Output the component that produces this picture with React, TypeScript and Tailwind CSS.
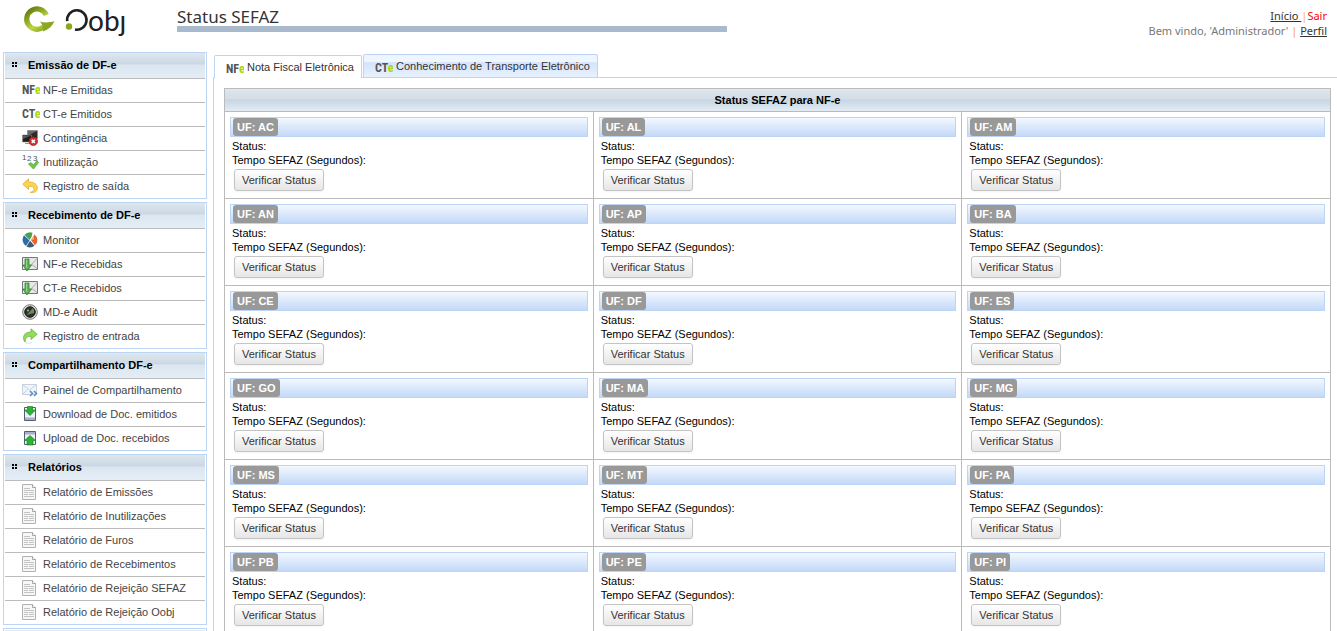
import type { ReactNode } from "react";

const SANS = "font-['Liberation_Sans',Arial,sans-serif]";
const HUMANIST = "font-['Noto_Sans','Open_Sans',sans-serif]";

function DfeIcon({ prefix }: { prefix: string }) {
  return (
    <svg viewBox="0 0 18 16" className="h-4 w-[18px]" aria-hidden="true">
      <text x="0" y="12" fontSize="12" fontWeight="700" fontFamily="'Liberation Sans Narrow', 'Roboto Condensed', sans-serif" fill="#555">
        {prefix}
        <tspan fontSize="12" fill="#a6d60c">e</tspan>
      </text>
    </svg>
  );
}

function ContingencyIcon() {
  return (
    <svg viewBox="0 0 16 16" className="size-4" aria-hidden="true">
      <path d="M5.500.5h10v8h-10z" fill="#2b2b2b" stroke="#8a8a8a" strokeWidth=".6" />
      <path d="M6 1h9L6 5.500z" fill="#6a6a6a" />
      <path d="M.5 5h9v7h-9z" fill="#1d1d1d" stroke="#8a8a8a" strokeWidth=".6" />
      <path d="M1 5.500h8L1 9z" fill="#5a5a5a" />
      <path d="M3 13h5v1H3z" fill="#999" />
      <circle cx="11.300" cy="11.300" r="4.300" fill="#d2302c" stroke="#a31212" strokeWidth=".6" />
      <path d="m9.700 9.700 3.200 3.200m0-3.200-3.200 3.200" stroke="#fff" strokeWidth="1.500" />
    </svg>
  );
}

function NumbersIcon() {
  return (
    <svg viewBox="0 0 17 16" className="h-4 w-[17px]" aria-hidden="true">
      <g fontSize="8" fontFamily="'Liberation Sans', sans-serif" fill="#555">
        <text x="0" y="6">1</text>
        <text x="5" y="7">2</text>
        <text x="11" y="7">3</text>
      </g>
      <path d="m6.500 10 2.500-1.500 2.500 2.500L15 6.500l1.500 2-5 6.500z" fill="#6ccb3f" stroke="#47a52a" strokeWidth=".7" strokeLinejoin="round" />
    </svg>
  );
}

function UndoIcon() {
  return (
    <svg viewBox="0 0 16 16" className="size-4" aria-hidden="true">
      <path d="M6.500.8.8 6.200l5.700 5.300V8.300c3.500-.3 5.500.7 5.500 3 0 1.700-1.500 2.700-4 3 5 .7 7.300-1 7.300-4.300 0-4-3.300-6-8.800-6z" fill="#fad54d" stroke="#dca629" strokeWidth=".7" strokeLinejoin="round" />
    </svg>
  );
}

function RedoIcon() {
  return (
    <svg viewBox="0 0 16 16" className="size-4" aria-hidden="true">
      <path d="m9 .8 6.200 5.400L9 11.500V8.300c-3.500-.2-5.500 1-6 5.700-2.500-3-2.500-10 6-10z" fill="#93dc5c" stroke="#5cae35" strokeWidth=".7" strokeLinejoin="round" />
      <path d="M3 14.500c2 .8 5 .8 7 0" fill="none" stroke="#ddd" />
    </svg>
  );
}

function MonitorIcon() {
  return (
    <svg viewBox="0 0 16 16" className="size-4" aria-hidden="true">
      <path d="M7.500 8 2.500 2.800A7.500 7.500 0 0 1 10.500.8L9.500 5z" fill="#4d9f52" />
      <path d="M7.500 8.500 2 3.300A7.500 7.500 0 0 0 4 14z" fill="#2f6ca8" />
      <path d="M9 8 12.500 2.500a7 7 0 0 1 .5 10.800z" fill="#e8632b" />
      <path d="m9 8 3-4v3.500z" fill="#f7b58f" />
      <path d="m8 8.800 4.500 5a7 7 0 0 1-8 .7z" fill="#3f5a75" />
    </svg>
  );
}

function ReceivedIcon() {
  return (
    <svg viewBox="0 0 16 16" className="size-4" aria-hidden="true">
      <path d="M.5 1.500h15v12H.5z" fill="#e4e8e6" stroke="#6f7975" />
      <path d="m6 8 2 2 7-7.500M10 8.500l5 4" fill="none" stroke="#a5aaa8" />
      <path d="M3 3h4v6h2.500L5 15 .8 9H3z" fill="#58b04c" stroke="#2b7a2a" strokeWidth=".7" />
      <path d="M4.200 3.500h1V12h-1z" fill="#a5dc9a" />
    </svg>
  );
}

function RadarIcon() {
  return (
    <svg viewBox="0 0 16 16" className="size-4" aria-hidden="true">
      <circle cx="8" cy="8" r="7.300" fill="#e5e5e5" stroke="#666" strokeWidth=".9" />
      <circle cx="8" cy="8" r="5.300" fill="#2b3426" stroke="#1b1b1b" />
      <path d="M4.500 11 11 4a5 5 0 0 1 1 5z" fill="#6d8a58" />
      <circle cx="6" cy="6.500" r="1" fill="#9fc08a" />
    </svg>
  );
}

function ShareIcon() {
  return (
    <svg viewBox="0 0 16 16" className="size-4" aria-hidden="true">
      <path d="M.5 2.500h14v10H.5z" fill="#f1f5fa" stroke="#c7d2e0" />
      <path d="m1 3 6.500 5L14 3M1 12l4.500-4.500" fill="none" stroke="#c7d2e0" />
      <path d="m8 9 2.500 2.500L8 14m4-5 2.500 2.500L12 14" fill="none" stroke="#5f8fbf" strokeWidth="1.600" />
    </svg>
  );
}

function DriveIcon({ up }: { up?: boolean }) {
  return (
    <svg viewBox="0 0 16 16" className="size-4" aria-hidden="true">
      <path d="M2.500 1.500h11v13h-11z" fill="#eef0f5" stroke="#555c78" />
      {up ? (
        <>
          <path d="M3 2h10v2.500H3z" fill="#a9afc4" />
          <path d="m8 5.500 5.500 5H11v4.500H5v-4.500H2.500z" fill="#2db136" stroke="#0e7a1a" strokeWidth=".6" />
        </>
      ) : (
        <>
          <path d="M3 11.500h10V14H3z" fill="#a9afc4" />
          <path d="M5.500.5h5V4h3L8 9.500 2.500 4h3z" fill="#2db136" stroke="#0e7a1a" strokeWidth=".6" />
        </>
      )}
    </svg>
  );
}

function ReportIcon() {
  return (
    <svg viewBox="0 0 16 16" className="size-4" aria-hidden="true">
      <path d="M.5.5h10l3 3v12H.5z" fill="#f7f7f7" stroke="#b0b0b0" />
      <path d="M10.500.5v3h3" fill="#fff" stroke="#a5a5a5" />
      <path d="M2 4.500h6M2 6.500h10M2 8.500h4m1 0h5M2 10.500h4m1 0h5M2 12.500h10" stroke="#c4c4c4" />
    </svg>
  );
}

type Item = { label: string; icon: ReactNode };

const menus: { title: string; items: Item[] }[] = [
  {
    title: "Emissão de DF-e",
    items: [
      { label: "NF-e Emitidas", icon: <DfeIcon prefix="NF" /> },
      { label: "CT-e Emitidos", icon: <DfeIcon prefix="CT" /> },
      { label: "Contingência", icon: <ContingencyIcon /> },
      { label: "Inutilização", icon: <NumbersIcon /> },
      { label: "Registro de saída", icon: <UndoIcon /> },
    ],
  },
  {
    title: "Recebimento de DF-e",
    items: [
      { label: "Monitor", icon: <MonitorIcon /> },
      { label: "NF-e Recebidas", icon: <ReceivedIcon /> },
      { label: "CT-e Recebidos", icon: <ReceivedIcon /> },
      { label: "MD-e Audit", icon: <RadarIcon /> },
      { label: "Registro de entrada", icon: <RedoIcon /> },
    ],
  },
  {
    title: "Compartilhamento DF-e",
    items: [
      { label: "Painel de Compartilhamento", icon: <ShareIcon /> },
      { label: "Download de Doc. emitidos", icon: <DriveIcon /> },
      { label: "Upload de Doc. recebidos", icon: <DriveIcon up /> },
    ],
  },
  {
    title: "Relatórios",
    items: [
      "Relatório de Emissões",
      "Relatório de Inutilizações",
      "Relatório de Furos",
      "Relatório de Recebimentos",
      "Relatório de Rejeição SEFAZ",
      "Relatório de Rejeição Oobj",
    ].map((label) => ({ label, icon: <ReportIcon /> })),
  },
];

const states = [
  ["AC", "AL", "AM"],
  ["AN", "AP", "BA"],
  ["CE", "DF", "ES"],
  ["GO", "MA", "MG"],
  ["MS", "MT", "PA"],
  ["PB", "PE", "PI"],
];

function Logo() {
  return (
    <svg viewBox="0 0 112 42" className="h-[42px] w-28" role="img" aria-label="Oobj">
      <defs>
        <linearGradient id="swirl" x1="0" y1="0" x2=".7" y2="1">
          <stop offset="0" stopColor="#5d7310" />
          <stop offset=".35" stopColor="#86a31c" />
          <stop offset=".75" stopColor="#c0d548" />
          <stop offset="1" stopColor="#9bb828" />
        </linearGradient>
      </defs>
      <path d="M24.300 15A10.200 10.200 0 1 0 21.500 26.900" fill="none" stroke="url(#swirl)" strokeWidth="5.200" />
      <path d="M18 21.500c4 1.500 9 1.200 14.500-.5-2 5-6 8.500-11.500 10.500.5-3.500-.5-7-3-10z" fill="#8ba624" />
      <path d="M45.200 21.200A9.700 9.700 0 1 1 53 29.500" fill="none" stroke="#222021" strokeWidth="2.600" />
      <circle cx="47" cy="26.500" r="3.200" fill="#8aa81e" />
      <text x="66" y="31" fontSize="28" fontFamily="Lato, sans-serif" fill="#222021">obȷ</text>
    </svg>
  );
}

function Grip() {
  return (
    <span className="mb-[2px] grid grid-cols-2 gap-px" aria-hidden="true">
      <i className="size-[2px] bg-black" />
      <i className="size-[2px] bg-black" />
      <i className="size-[2px] bg-black" />
      <i className="size-[2px] bg-black" />
    </span>
  );
}

function MenuPanel({ title, items }: { title: string; items: Item[] }) {
  return (
    <section className="border border-[#bcd5f5] px-px">
      <h2 className="flex h-[26px] items-center gap-[11px] border-b border-[#bbb] bg-[linear-gradient(#dfe7ee_0%,#cbd8e4_42%,#dbe6f0_50%,#e5eef6_100%)] pl-[7px] text-[11px] font-bold text-black">
        <Grip />
        {title}
      </h2>
      <ul className="divide-y divide-[#bbb]">
        {items.map((item) => (
          <li key={item.label}>
            <a href="#" className="flex h-[23px] items-center pl-[17px] text-[11px] text-[#444]">
              <span className="w-[21px] pb-[2px]">{item.icon}</span>
              {item.label}
            </a>
          </li>
        ))}
      </ul>
    </section>
  );
}

function StateCell({ uf }: { uf: string }) {
  return (
    <td className="h-[87px] border border-[#bbb] px-[5px] pt-[5px] pb-[7px] align-top">
      <div className="flex h-5 items-center border border-[#bcd5f5] bg-linear-to-b from-[#f3f8fe] to-[#c3d9f8] pl-[2px]">
        <span className="rounded-[3px] bg-[#999] px-1 text-[11px] leading-[18px] font-bold text-white">UF: {uf}</span>
      </div>
      <dl className="px-[2px] pt-[2px] text-[11px] leading-[14px]">
        <dt>Status:</dt>
        <dt>Tempo SEFAZ (Segundos):</dt>
      </dl>
      <button className="mt-[2px] ml-1 block h-[22px] rounded-[3px] border border-[#c4c4c4] bg-linear-to-b from-white to-[#e6e6e6] px-[7px] text-[11px] leading-5 text-[#333] shadow-xs">
        Verificar Status
      </button>
    </td>
  );
}

export default function App() {
  return (
    <div className={`${SANS} h-screen overflow-hidden bg-white text-black`}>
      <header className="flex h-[52px] items-start">
        <div className="w-[177px] shrink-0 pl-[22px]">
          <Logo />
        </div>
        <h1 className={`${HUMANIST} w-[550px] border-b-[6px] border-[#a9bacd] pt-2 text-[17px] leading-[18px] text-[#333]`}>
          Status SEFAZ
        </h1>
        <div className={`${HUMANIST} ml-auto pt-2 pr-[10px] text-right text-[11px] leading-[15px] text-[#777]`}>
          <p>
            <a href="#" className="text-[#333] underline">Início&nbsp;</a>
            <span className="text-[#f5b070]">|</span>
            <a href="#" className="text-[#f00]">Sair</a>
          </p>
          <p>
            Bem vindo, 'Administrador' <span className="text-[#f5a050]">|</span>{" "}
            <a href="#" className="text-[#333] underline">Perfil</a>
          </p>
        </div>
      </header>
      <div className="flex items-start">
        <nav className="ml-[3px] flex w-[204px] shrink-0 flex-col gap-[3px]">
          {menus.map((menu) => (
            <MenuPanel key={menu.title} {...menu} />
          ))}
          <div className="h-6 border border-[#bcd5f5] p-px">
            <div className="h-5 bg-[#e0e9f1]" />
          </div>
        </nav>
        <main className="ml-[6px] min-w-0 grow pt-[2px]">
          <div role="tablist" className="flex items-end border-b border-[#bcd5f5] pl-px">
            <button role="tab" aria-selected="true" className="-mb-px flex h-[23px] items-center rounded-t-[2px] border border-b-0 border-[#bcd5f5] bg-white pr-[7px] pl-[11px] text-[11px] text-[#333]">
              <span className="w-[21px] pt-1"><DfeIcon prefix="NF" /></span>
              Nota Fiscal Eletrônica
            </button>
            <button role="tab" aria-selected="false" className="ml-px flex h-[23px] items-center rounded-t-[2px] border border-b-0 border-[#bcd5f5] bg-[linear-gradient(#eef5fe_0%,#eef5fe_30%,#d3e4fb_35%,#e8f1fd_100%)] pr-[7px] pl-[11px] text-[11px] text-[#333]">
              <span className="w-[21px] pt-1"><DfeIcon prefix="CT" /></span>
              Conhecimento de Transporte Eletrônico
            </button>
          </div>
          <div className="border-l border-[#bcd5f5] py-[10px] pr-[6px] pl-[10px]">
            <table className="w-full table-fixed border-collapse">
              <thead>
                <tr>
                  <th colSpan={3} className="h-[23px] border border-[#bbb] bg-[linear-gradient(#dde5ed_0%,#d3dde7_45%,#c6d5e2_46%,#e4edf5_100%)] text-[11px] leading-[14px] font-bold">
                    Status SEFAZ para NF-e
                  </th>
                </tr>
              </thead>
              <tbody>
                {states.map((row) => (
                  <tr key={row[0]}>
                    {row.map((uf) => (
                      <StateCell key={uf} uf={uf} />
                    ))}
                  </tr>
                ))}
              </tbody>
            </table>
          </div>
        </main>
      </div>
    </div>
  );
}
